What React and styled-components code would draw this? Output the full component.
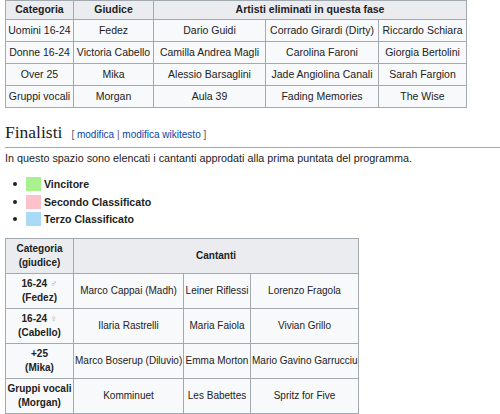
import React from 'react';
import styled, { createGlobalStyle } from 'styled-components';

const GlobalStyle = createGlobalStyle`
  html, body {
    margin: 0;
    padding: 0;
    background: #fff;
  }
  body {
    font-family: "Liberation Sans", Arial, sans-serif;
    color: #222;
  }
`;

const Page = styled.div`
  width: 500px;
  height: 414px;
  overflow: hidden;
  padding-left: 5px;
  box-sizing: border-box;
`;

const Table = styled.table`
  border-collapse: collapse;
  table-layout: fixed;
  font-size: ${p => p.$fs || 10.5}px;
  background: #f8f9fa;
  color: #222;
`;

const Th = styled.th`
  background: #eaecf0;
  border: 1px solid #a2a9b1;
  font-weight: bold;
  text-align: center;
  padding: 0 1px;
  height: ${p => p.$h || 18}px;
  line-height: 1.45;
`;

const Td = styled.td`
  border: 1px solid #a2a9b1;
  text-align: center;
  padding: 0 1px;
  height: ${p => p.$h || 21}px;
  white-space: nowrap;
  font-weight: ${p => (p.$bold ? 'bold' : 'normal')};
  line-height: 1.45;
`;

const Sign = styled.span`
  color: #a2a9b1;
  font-weight: normal;
`;

const Heading = styled.h2`
  margin: 17px 0 0 0;
  font-family: "Liberation Serif", "DejaVu Serif", serif;
  font-weight: normal;
  font-size: 17.5px;
  line-height: 14px;
  padding-bottom: 5px;
  border-bottom: 1px solid #a2a9b1;
  display: flex;
  align-items: baseline;
  gap: 9px;
`;

const EditSection = styled.span`
  font-family: "Liberation Sans", Arial, sans-serif;
  font-size: 10px;
  color: #54595d;
`;

const Link = styled.a`
  color: #0645ad;
  text-decoration: none;
`;

const Para = styled.p`
  margin: 3px 0 0 0;
  font-size: 10.8px;
  line-height: 14px;
`;

const Legend = styled.ul`
  list-style: none;
  margin: 12px 0 0 0;
  padding: 0 0 0 8px;
  display: flex;
  flex-direction: column;
  gap: 3.5px;
`;

const LegendItem = styled.li`
  display: flex;
  align-items: center;
  gap: 3px;
  font-size: 10.6px;
  font-weight: bold;
  height: 14px;
  &::before {
    content: '';
    width: 4px;
    height: 4px;
    border-radius: 50%;
    background: #222;
    margin-right: 6px;
  }
`;

const Swatch = styled.span`
  width: 15px;
  height: 14px;
  background: ${p => p.$color};
`;

const SecondTable = styled(Table)`
  margin-top: 12px;
`;

const eliminati = [
  ['Uomini 16-24', 'Fedez', 'Dario Guidi', 'Corrado Girardi (Dirty)', 'Riccardo Schiara'],
  ['Donne 16-24', 'Victoria Cabello', 'Camilla Andrea Magli', 'Carolina Faroni', 'Giorgia Bertolini'],
  ['Over 25', 'Mika', 'Alessio Barsaglini', 'Jade Angiolina Canali', 'Sarah Fargion'],
  ['Gruppi vocali', 'Morgan', 'Aula 39', 'Fading Memories', 'The Wise'],
];

const finalisti = [
  { cat: '16-24', sign: '♂', judge: '(Fedez)', names: ['Marco Cappai (Madh)', 'Leiner Riflessi', 'Lorenzo Fragola'] },
  { cat: '16-24', sign: '♀', judge: '(Cabello)', names: ['Ilaria Rastrelli', 'Maria Faiola', 'Vivian Grillo'] },
  { cat: '+25', judge: '(Mika)', names: ['Marco Boserup (Diluvio)', 'Emma Morton', 'Mario Gavino Garrucciu'] },
  { cat: 'Gruppi vocali', judge: '(Morgan)', names: ['Komminuet', 'Les Babettes', 'Spritz for Five'] },
];

export default function App() {
  return (
    <Page>
      <GlobalStyle />
      <Table style={{ width: 461 }}>
        <colgroup>
          <col style={{ width: 68 }} />
          <col style={{ width: 80 }} />
          <col style={{ width: 112 }} />
          <col style={{ width: 113 }} />
          <col style={{ width: 88 }} />
        </colgroup>
        <thead>
          <tr>
            <Th>Categoria</Th>
            <Th>Giudice</Th>
            <Th colSpan={3}>Artisti eliminati in questa fase</Th>
          </tr>
        </thead>
        <tbody>
          {eliminati.map(row => (
            <tr key={row[0]}>
              {row.map(c => (
                <Td key={c}>{c}</Td>
              ))}
            </tr>
          ))}
        </tbody>
      </Table>

      <Heading>
        Finalisti
        <EditSection>
          [ <Link>modifica</Link> | <Link>modifica wikitesto</Link> ]
        </EditSection>
      </Heading>
      <Para>In questo spazio sono elencati i cantanti approdati alla prima puntata del programma.</Para>
      <Legend>
        <LegendItem><Swatch $color="#a8f18e" />Vincitore</LegendItem>
        <LegendItem><Swatch $color="#fdc1cc" />Secondo Classificato</LegendItem>
        <LegendItem><Swatch $color="#a9dbf7" />Terzo Classificato</LegendItem>
      </Legend>

      <SecondTable $fs={10} style={{ width: 353 }}>
        <colgroup>
          <col style={{ width: 68 }} />
          <col style={{ width: 110 }} />
          <col style={{ width: 67 }} />
          <col style={{ width: 108 }} />
        </colgroup>
        <thead>
          <tr>
            <Th $h={34}>Categoria<br />(giudice)</Th>
            <Th $h={34} colSpan={3}>Cantanti</Th>
          </tr>
        </thead>
        <tbody>
          {finalisti.map(r => (
            <tr key={r.judge}>
              <Td $h={34} $bold>
                {r.cat}{r.sign && <Sign> {r.sign}</Sign>}
                <br />
                {r.judge}
              </Td>
              {r.names.map(n => (
                <Td $h={34} key={n}>{n}</Td>
              ))}
            </tr>
          ))}
        </tbody>
      </SecondTable>
    </Page>
  );
}
